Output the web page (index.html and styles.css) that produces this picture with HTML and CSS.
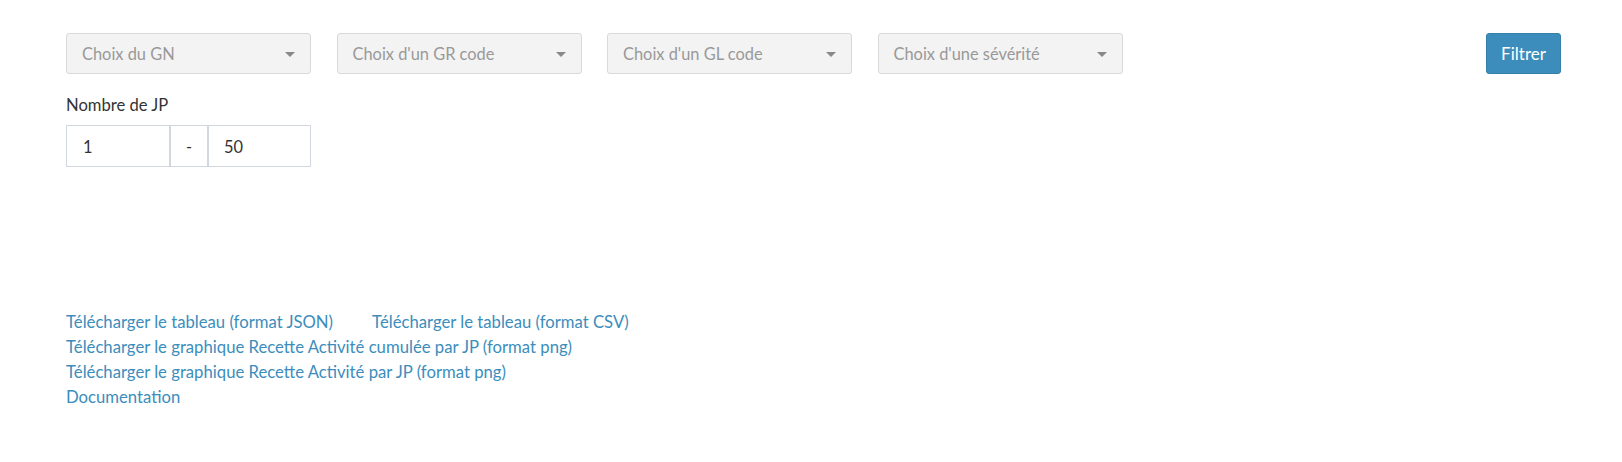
FILE: index.html
```html
<!DOCTYPE html>
<html lang="fr">
<head>
<meta charset="utf-8">
<title>Filtres</title>
<link rel="stylesheet" href="styles.css">
</head>
<body>
<div class="page">
  <div class="filters">
    <div class="select"><span class="placeholder">Choix du GN</span><span class="caret"></span></div>
    <div class="select"><span class="placeholder">Choix d'un GR code</span><span class="caret"></span></div>
    <div class="select"><span class="placeholder">Choix d'un GL code</span><span class="caret"></span></div>
    <div class="select"><span class="placeholder">Choix d'une sévérité</span><span class="caret"></span></div>
    <button class="btn">Filtrer</button>
  </div>
  <div class="jp">
    <label class="jp-label">Nombre de JP</label>
    <div class="input-group">
      <div class="field field-from">1</div>
      <div class="addon">-</div>
      <div class="field field-to">50</div>
    </div>
  </div>
  <div class="links">
    <div class="link-row"><a href="#">Télécharger le tableau (format JSON)</a><a href="#" class="second">Télécharger le tableau (format CSV)</a></div>
    <div class="link-row"><a href="#">Télécharger le graphique Recette Activité cumulée par JP (format png)</a></div>
    <div class="link-row"><a href="#">Télécharger le graphique Recette Activité par JP (format png)</a></div>
    <div class="link-row"><a href="#">Documentation</a></div>
  </div>
</div>
</body>
</html>
```
FILE: styles.css
```css
* { box-sizing: border-box; }
body {
  margin: 0;
  background: #fff;
  font-family: Lato, "Open Sans", "Liberation Sans", sans-serif;
  font-size: 16.6px;
  color: #333;
}
.page {
  padding: 33px 61px 0 66px;
}
.filters {
  display: flex;
  gap: 25.5px;
  align-items: center;
}
.select {
  width: 245px;
  height: 41px;
  background: #f3f3f3;
  border: 1px solid #d9d9d9;
  border-radius: 3px;
  display: flex;
  align-items: center;
  justify-content: space-between;
  padding: 0 15px 0 15px;
}
.placeholder {
  color: #999;
  font-size: 16.4px;
}
.caret {
  width: 0;
  height: 0;
  border-left: 5px solid transparent;
  border-right: 5px solid transparent;
  border-top: 5px solid #888;
  margin-top: 2px;
}
.btn {
  margin-left: auto;
  width: 75px;
  height: 41px;
  background: #3c8dbc;
  border: 1px solid #367fa9;
  border-radius: 3px;
  color: #fff;
  font-family: inherit;
  font-size: 17px;
  padding: 0;
}
.jp {
  margin-top: 20px;
}
.jp-label {
  display: block;
  line-height: 22px;
  font-size: 16.6px;
  margin-bottom: 9px;
}
.input-group {
  display: flex;
  width: 245px;
  height: 42px;
}
.field, .addon {
  border: 1px solid #d2d6de;
  display: flex;
  align-items: center;
  font-size: 16.4px;
  color: #333;
}
.field-from {
  width: 105px;
  padding-left: 16px;
  border-right: 2px solid #d2d6de;
}
.addon {
  width: 37px;
  justify-content: center;
  border-left: 0;
  border-right: 1px solid #d2d6de;
}
.field-to {
  flex: 1;
  padding-left: 15px;
  border-left: 1px solid #d2d6de;
}
.links {
  margin-top: 143px;
}
.link-row {
  line-height: 25px;
  height: 25px;
}
.link-row a {
  color: #3c8dbc;
  text-decoration: none;
  font-size: 16.7px;
}
.link-row a.second {
  margin-left: 39px;
}
```
